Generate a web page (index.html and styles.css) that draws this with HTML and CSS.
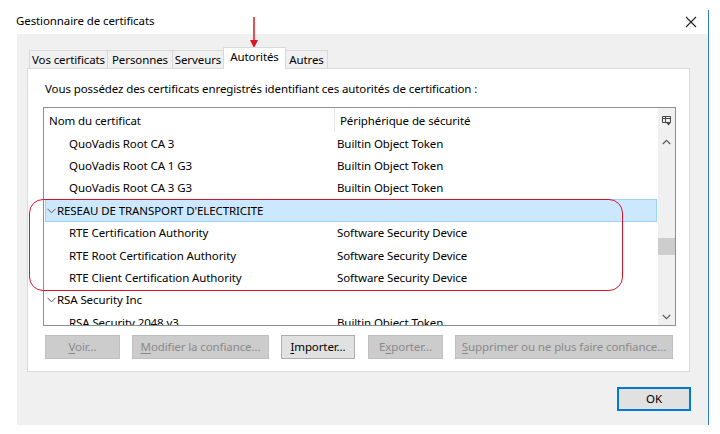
FILE: index.html
```html
<!DOCTYPE html>
<html lang="fr">
<head>
<meta charset="utf-8">
<title>Gestionnaire de certificats</title>
<link rel="stylesheet" href="styles.css">
</head>
<body>
<div class="window">
  <div class="titlebar">
    <span class="title">Gestionnaire de certificats</span>
    <svg class="close" width="12" height="12" viewBox="0 0 12 12"><path d="M1 1 L11 11 M11 1 L1 11" stroke="#222" stroke-width="1.1" fill="none"/></svg>
  </div>
  <div class="dialog">
    <div class="tabs">
      <div class="tab t1">Vos certificats</div>
      <div class="tab t2">Personnes</div>
      <div class="tab t3">Serveurs</div>
      <div class="tab t4 active">Autorités</div>
      <div class="tab t5">Autres</div>
    </div>
    <div class="panel">
      <p class="intro">Vous possédez des certificats enregistrés identifiant ces autorités de certification :</p>
      <div class="tree">
        <div class="list">
          <div class="head">
            <div class="c1">Nom du certificat</div>
            <div class="c2">Périphérique de sécurité</div>
          </div>
          <div class="row child"><div class="c1">QuoVadis Root CA 3</div><div class="c2">Builtin Object Token</div></div>
          <div class="row child"><div class="c1">QuoVadis Root CA 1 G3</div><div class="c2">Builtin Object Token</div></div>
          <div class="row child"><div class="c1">QuoVadis Root CA 3 G3</div><div class="c2">Builtin Object Token</div></div>
          <div class="row group selected"><svg class="chev" width="9" height="6" viewBox="0 0 9 6"><path d="M0.5 0.8 L4.5 4.8 L8.5 0.8" stroke="#555" stroke-width="1" fill="none"/></svg><span>RESEAU DE TRANSPORT D'ELECTRICITE</span></div>
          <div class="row child"><div class="c1">RTE Certification Authority</div><div class="c2">Software Security Device</div></div>
          <div class="row child"><div class="c1">RTE Root Certification Authority</div><div class="c2">Software Security Device</div></div>
          <div class="row child"><div class="c1">RTE Client Certification Authority</div><div class="c2">Software Security Device</div></div>
          <div class="row group"><svg class="chev" width="9" height="6" viewBox="0 0 9 6"><path d="M0.5 0.8 L4.5 4.8 L8.5 0.8" stroke="#555" stroke-width="1" fill="none"/></svg><span>RSA Security Inc</span></div>
          <div class="row child"><div class="c1">RSA Security 2048 v3</div><div class="c2">Builtin Object Token</div></div>
        </div>
        <div class="scroll">
          <div class="picker">
            <svg width="9" height="10" viewBox="0 0 9 10"><path d="M0.5 0.5 H8.5 V6.5 H0.5 Z M0.5 2.5 H8.5 M3.5 0.5 V6.5" stroke="#444" stroke-width="1" fill="none"/><path d="M4.5 7 H8.5 L6.5 9.5 Z" fill="#444"/></svg>
          </div>
          <div class="sbtn"><svg width="9" height="6" viewBox="0 0 9 6"><path d="M0.8 5 L4.5 1.3 L8.2 5" stroke="#606060" stroke-width="1.3" fill="none"/></svg></div>
          <div class="track"><div class="thumb"></div></div>
          <div class="sbtn"><svg width="9" height="6" viewBox="0 0 9 6"><path d="M0.8 1 L4.5 4.7 L8.2 1" stroke="#606060" stroke-width="1.3" fill="none"/></svg></div>
        </div>
      </div>
      <div class="buttons">
        <div class="btn disabled b-voir"><u>V</u>oir...</div>
        <div class="btn disabled b-mod"><u>M</u>odifier la confiance...</div>
        <div class="btn b-imp"><u>I</u>mporter...</div>
        <div class="btn disabled b-exp">E<u>x</u>porter...</div>
        <div class="btn disabled b-sup"><u>S</u>upprimer ou ne plus faire confiance...</div>
      </div>
    </div>
    <div class="footer">
      <div class="btn ok">OK</div>
    </div>
  </div>
  <div class="highlight"></div>
  <svg class="pointer" width="10" height="32" viewBox="0 0 10 32"><path d="M5 0 V24" stroke="#e0141e" stroke-width="1.5"/><path d="M1 23 H9 L5 31 Z" fill="#e0141e"/></svg>
</div>
</body>
</html>
```

FILE: styles.css
```css
* { box-sizing: border-box; }
html, body { margin: 0; padding: 0; background: #ffffff; }
body {
  font-family: "Noto Sans", "Open Sans", "DejaVu Sans", sans-serif;
  font-size: 11.5px;
  letter-spacing: -0.1px;
  color: #000;
  width: 720px;
  height: 434px;
  overflow: hidden;
}
.window {
  position: relative;
  margin-top: 10px;
  width: 709px;
  height: 415px;
  border-right: 1px solid #2f7dd4;
}
.titlebar {
  height: 24px;
  display: flex;
  justify-content: space-between;
  align-items: flex-start;
  padding: 3px 11px 0 16px;
}
.title { line-height: 16px; }
.close { margin-top: 3px; }
.dialog {
  margin-left: 17px;
  height: 391px;
  background: #f0f0f0;
  padding: 13px 17px 0 10px;
}
.tabs {
  display: flex;
  align-items: flex-end;
  height: 21px;
  margin-left: 2px;
  position: relative;
  z-index: 1;
}
.tab {
  height: 18px;
  line-height: 17px;
  border: 1px solid #d9d9d9;
  border-bottom: none;
  background: #f0f0f0;
  text-align: center;
  margin-left: -1px;
  white-space: nowrap;
}
.tab.t1 { margin-left: 0; width: 79px; }
.tab.t2 { width: 66px; }
.tab.t3 { width: 52px; }
.tab.t4 { width: 63px; }
.tab.t5 { width: 43px; }
.tab.active {
  height: 22px;
  background: #ffffff;
  margin-bottom: -1px;
  line-height: 18px;
  position: relative;
}
.panel {
  width: 663px;
  height: 304px;
  background: #ffffff;
  border: 1px solid #d9d9d9;
  padding: 12px 0 0 17px;
}
.intro {
  margin: 0;
  line-height: 16px;
  white-space: nowrap;
}
.tree {
  margin: 10px 0 0 -2px;
  width: 633px;
  height: 219px;
  border: 1px solid #8c8f95;
  display: flex;
  overflow: hidden;
}
.list {
  width: 614px;
  overflow: hidden;
}
.head {
  height: 24px;
  display: flex;
  align-items: center;
}
.head .c1 {
  width: 291px;
  height: 24px;
  line-height: 25px;
  padding-left: 5px;
  border-right: 1px solid #e5e5e5;
}
.head .c2 { padding-left: 5px; padding-top: 1px; }
.row {
  height: 22.4px;
  display: flex;
  align-items: center;
  white-space: nowrap;
}
.row.child .c1 { width: 290px; padding-left: 25px; }
.row.child .c2 { padding-left: 3px; }
.row.group {
  margin-left: 1px;
  width: 612px;
  border: 1px solid transparent;
  padding-left: 1px;
}
.row.group .chev { margin-right: 1px; margin-top: 1px; }
.row.group.selected {
  background: #cce8ff;
  border-color: #99d1ff;
}
.scroll {
  width: 17px;
  background: #f0f0f0;
  display: flex;
  flex-direction: column;
}
.picker {
  height: 25px;
  display: flex;
  align-items: center;
  justify-content: center;
  padding-top: 1px;
}
.sbtn {
  height: 17px;
  display: flex;
  align-items: center;
  justify-content: center;
}
.track {
  flex: 1;
  padding-top: 88px;
}
.thumb {
  height: 17px;
  background: #cdcdcd;
}
.buttons {
  display: flex;
  gap: 12px;
  margin-top: 9px;
}
.btn {
  height: 24px;
  line-height: 22px;
  text-align: center;
  border: 1px solid #adadad;
  background: #e1e1e1;
  white-space: nowrap;
}
.btn u { text-decoration: underline; text-underline-offset: 2px; }
.btn.disabled {
  background: #cccccc;
  border-color: #bfbfbf;
  color: #8a8a8a;
}
.b-voir { width: 75px; }
.b-mod { width: 137px; }
.b-imp { width: 74px; }
.b-exp { width: 75px; margin-left: 1px; }
.b-sup { width: 218px; }
.footer {
  display: flex;
  justify-content: flex-end;
  margin-top: 15px;
}
.btn.ok {
  width: 74px;
  height: 24px;
  border: 1px solid #0078d7;
  box-shadow: inset 0 0 0 1px #0078d7;
  background: #e1e1e1;
}
.highlight {
  position: absolute;
  left: 29px;
  top: 189px;
  width: 594px;
  height: 92px;
  border: 1px solid #d8142a;
  border-radius: 14px;
  pointer-events: none;
}
.pointer {
  position: absolute;
  left: 249px;
  top: 7px;
}
```
